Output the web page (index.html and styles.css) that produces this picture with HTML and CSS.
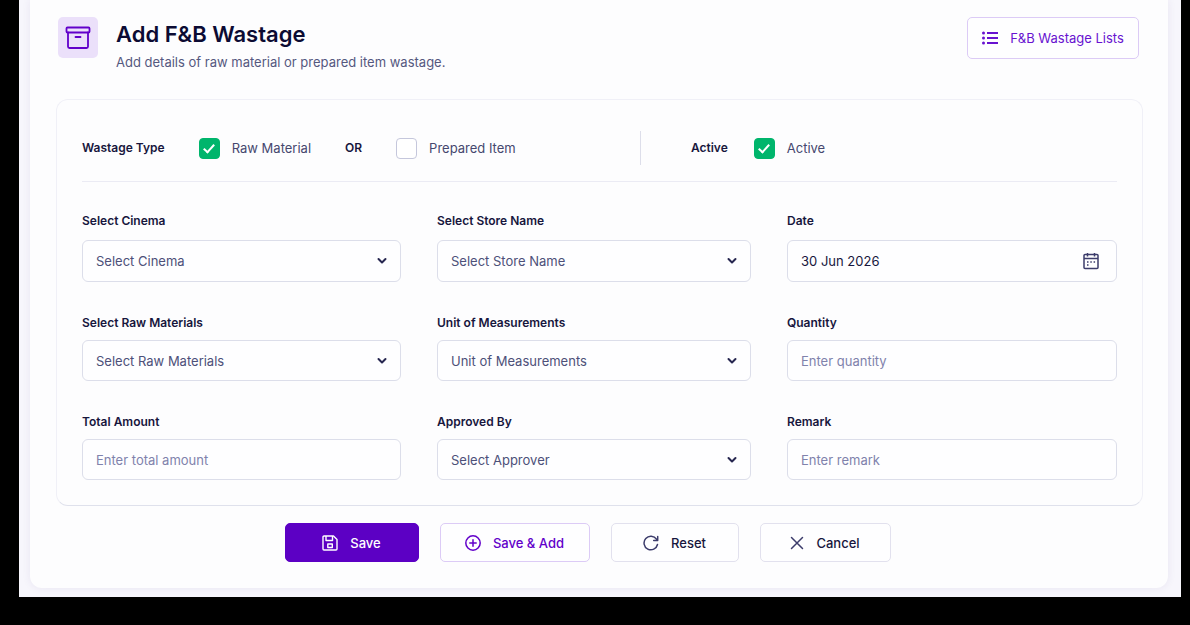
FILE: index.html
```html
<!DOCTYPE html>
<html lang="en">
<head>
  <meta charset="UTF-8" />
  <meta name="viewport" content="width=device-width, initial-scale=1.0" />
  <title>Add F&amp;B Wastage</title>
  <link rel="stylesheet" href="styles.css">
</head>
<body>

<main class="page">
  <form class="card">
    <header class="header">
      <div class="header-icon">
        <svg width="26" height="24" viewBox="0 0 26 24" fill="none" stroke="currentColor" stroke-width="1.8" stroke-linejoin="round" stroke-linecap="round">
          <rect x="1.500" y="1.500" width="23" height="5" rx="1" />
          <path d="M3 6.500v14a1.500 1.500 0 0 0 1.500 1.500h17a1.500 1.500 0 0 0 1.500-1.500v-14M10.500 11h5" />
        </svg>
      </div>
      <div class="header-text">
        <h1>Add F&amp;B Wastage</h1>
        <p>Add details of raw material or prepared item wastage.</p>
      </div>
      <button type="button" class="btn btn-list">
        <svg width="16" height="14" viewBox="0 0 16 14" fill="currentColor">
          <rect x="5" y="1" width="11" height="2" />
          <rect x="5" y="6" width="11" height="2" />
          <rect x="5" y="11" width="11" height="2" />
          <circle cx="1.500" cy="2" r="1.500" />
          <circle cx="1.500" cy="7" r="1.500" />
          <circle cx="1.500" cy="12" r="1.500" />
        </svg>
        F&amp;B Wastage Lists
      </button>
    </header>

    <section class="panel">
      <div class="types">
        <div class="type-group" role="group" aria-labelledby="typeLabel">
          <span class="type-title" id="typeLabel">Wastage Type</span>
          <label class="check"><input type="checkbox" checked />Raw Material</label>
          <span class="or">OR</span>
          <label class="check"><input type="checkbox" />Prepared Item</label>
        </div>
        <div class="active-group" role="group" aria-labelledby="activeLabel">
          <span class="type-title" id="activeLabel">Active</span>
          <label class="check"><input type="checkbox" checked />Active</label>
        </div>
      </div>

      <div class="rows">
        <div class="row row-top">
          <div class="field">
            <label for="cinema">Select Cinema</label>
            <div class="control">
              <select id="cinema"><option>Select Cinema</option></select>
              <svg class="chevron" width="10" height="8" viewBox="0 0 10 8"><path d="M1.500 2 5 5.500 8.500 2" /></svg>
            </div>
          </div>
          <div class="field">
            <label for="store">Select Store Name</label>
            <div class="control">
              <select id="store"><option>Select Store Name</option></select>
              <svg class="chevron" width="10" height="8" viewBox="0 0 10 8"><path d="M1.500 2 5 5.500 8.500 2" /></svg>
            </div>
          </div>
          <div class="field">
            <label for="date">Date</label>
            <div class="control">
              <input type="text" id="date" value="30 Jun 2026" />
              <svg class="calendar" width="16" height="18" viewBox="0 0 16 18" fill="none" stroke="currentColor" stroke-width="1.500">
                <rect x="1" y="2.500" width="14" height="14" rx="1" />
                <path d="M1 6.500h14M4.500 1v3.500M11.500 1v3.500" />
                <path d="M4 10h1.500M7.300 10h1.500M10.600 10h1.500M4 13h1.500" />
              </svg>
            </div>
          </div>
        </div>

        <div class="row">
          <div class="field">
            <label for="material">Select Raw Materials</label>
            <div class="control">
              <select id="material"><option>Select Raw Materials</option></select>
              <svg class="chevron" width="10" height="8" viewBox="0 0 10 8"><path d="M1.500 2 5 5.500 8.500 2" /></svg>
            </div>
          </div>
          <div class="field">
            <label for="unit">Unit of Measurements</label>
            <div class="control">
              <select id="unit"><option>Unit of Measurements</option></select>
              <svg class="chevron" width="10" height="8" viewBox="0 0 10 8"><path d="M1.500 2 5 5.500 8.500 2" /></svg>
            </div>
          </div>
          <div class="field">
            <label for="quantity">Quantity</label>
            <div class="control">
              <input type="text" id="quantity" placeholder="Enter quantity" />
            </div>
          </div>
        </div>

        <div class="row">
          <div class="field">
            <label for="amount">Total Amount</label>
            <div class="control">
              <input type="text" id="amount" placeholder="Enter total amount" />
            </div>
          </div>
          <div class="field">
            <label for="approver">Approved By</label>
            <div class="control">
              <select id="approver"><option>Select Approver</option></select>
              <svg class="chevron" width="10" height="8" viewBox="0 0 10 8"><path d="M1.500 2 5 5.500 8.500 2" /></svg>
            </div>
          </div>
          <div class="field">
            <label for="remark">Remark</label>
            <div class="control">
              <input type="text" id="remark" placeholder="Enter remark" />
            </div>
          </div>
        </div>
      </div>
    </section>

    <div class="actions">
      <button type="submit" class="btn btn-save">
        <svg width="16" height="16" viewBox="0 0 16 16" fill="none" stroke="currentColor" stroke-width="1.400" stroke-linejoin="round">
          <path d="M1 2a1 1 0 0 1 1-1h9.500L15 4.500V14a1 1 0 0 1-1 1H2a1 1 0 0 1-1-1z" />
          <path d="M4 1v4.500h6.500V1M5.800 9h4.500v3.500h-4.500z" />
        </svg>
        Save
      </button>
      <button type="button" class="btn btn-add">
        <svg width="16" height="16" viewBox="0 0 16 16" fill="none" stroke="currentColor" stroke-width="1.500" stroke-linecap="round">
          <circle cx="8" cy="8" r="7.200" />
          <path d="M8 4.800v6.400M4.800 8h6.400" />
        </svg>
        Save &amp; Add
      </button>
      <button type="reset" class="btn btn-reset">
        <svg width="16" height="16" viewBox="0 0 16 16" fill="none" stroke="currentColor" stroke-width="1.500" stroke-linecap="round" stroke-linejoin="round">
          <path d="M14.500 9.500A6.800 6.800 0 1 1 13.500 4.200L14.500 5.500M14.700 1.500v4h-4" />
        </svg>
        Reset
      </button>
      <button type="button" class="btn btn-cancel">
        <svg width="14" height="14" viewBox="0 0 14 14" fill="none" stroke="currentColor" stroke-width="1.500" stroke-linecap="round">
          <path d="M1.500 1.500l11 11M12.500 1.500l-11 11" />
        </svg>
        Cancel
      </button>
    </div>
  </form>
</main>

</body>
</html>
```
FILE: styles.css
```css
* {
  box-sizing: border-box;
}
body {
  margin: 0;
  padding: 0 9px 28px 19px;
  background: #000;
  color: #17163d;
  font-family: Inter, sans-serif;
  font-size: 13px;
  line-height: 18px;
}
.page {
  background: #f7f6fc;
  padding: 0 13px 9px 11px;
  overflow: hidden;
}
.card {
  background: #fdfdfe;
  border-radius: 0 0 12px 12px;
  box-shadow: 0 0 8px rgba(60, 40, 120, 0.08);
  padding: 17px 25px 26px 26px;
}

/* header */
.header {
  display: flex;
  align-items: flex-start;
  padding: 0 4px 0 2px;
  margin-bottom: 27px;
}
.header-icon {
  display: flex;
  align-items: center;
  justify-content: center;
  width: 40px;
  height: 41px;
  border-radius: 5px;
  background: #ebe0fa;
  color: #6200ca;
}
.header-text {
  flex: 1;
  margin-left: 18px;
}
h1 {
  margin: 0;
  font-size: 22px;
  line-height: 34px;
  font-weight: 600;
  color: #0c0b33;
}
.header-text p {
  margin: 1px 0 0;
  line-height: 20px;
  color: #55587f;
}

/* buttons */
.btn {
  display: flex;
  align-items: center;
  justify-content: center;
  gap: 12px;
  height: 39px;
  padding: 0;
  border: 1px solid #e2e1ee;
  border-radius: 5px;
  background: #fefeff;
  color: #17163d;
  font-family: inherit;
  font-size: 13px;
  font-weight: 500;
  cursor: pointer;
}
.btn-list {
  width: 172px;
  height: 42px;
  border-color: #dccbf6;
  color: #6812d0;
  font-weight: 400;
}
.btn-save {
  width: 134px;
  border-color: #5c00c4;
  background: #5c00c4;
  color: #fff;
}
.btn-add {
  width: 150px;
  border-color: #dccbf6;
  color: #6200ca;
}
.btn-reset {
  width: 128px;
}
.btn-cancel {
  width: 131px;
}
.btn-reset svg, .btn-cancel svg {
  color: #3c3c6b;
}

/* form panel */
.panel {
  padding: 31px 25px 25px;
  border: 1px solid #f0f0f7;
  border-bottom-color: #dfe1ec;
  border-radius: 12px;
}
.types {
  display: flex;
  padding-bottom: 16px;
  margin-bottom: 30px;
  border-bottom: 1px solid #ebebf4;
}
.type-group, .active-group {
  display: flex;
  align-items: center;
  height: 34px;
}
.type-group {
  flex: 0 0 54%;
  gap: 34px;
  border-right: 1px solid #dddeea;
}
.active-group {
  gap: 26px;
  padding-left: 50px;
}
.type-title, .or {
  font-size: 12px;
  font-weight: 600;
}
.check {
  display: flex;
  align-items: center;
  gap: 12px;
  color: #46486f;
}
.check input {
  appearance: none;
  display: flex;
  justify-content: center;
  width: 21px;
  height: 21px;
  margin: 0;
  border: 1px solid #c5c7dc;
  border-radius: 4px;
  background: #fff;
}
.check input:checked {
  border-color: #00b56c;
  background: #00b56c;
}
.check input:checked::before {
  content: "";
  width: 4px;
  height: 9px;
  margin-top: 3px;
  border: solid #fff;
  border-width: 0 2px 2px 0;
  transform: rotate(42deg);
}

/* fields */
.rows {
  display: grid;
  gap: 32px;
}
.row {
  display: grid;
  grid-template-columns: 319fr 314fr 330fr;
  gap: 36px;
}
.field {
  display: flex;
  flex-direction: column;
  gap: 8px;
  min-width: 0;
}
.field label {
  font-size: 12px;
  font-weight: 600;
}
.control {
  position: relative;
}
.control select, .control input {
  appearance: none;
  display: block;
  width: 100%;
  height: 41px;
  padding: 0 13px;
  border: 1px solid #dcdeea;
  border-radius: 6px;
  background: #fefeff;
  color: #4d5079;
  font-family: inherit;
  font-size: 13px;
}
.control input {
  color: #17163d;
}
.control input::placeholder {
  color: #8082ac;
}
.row-top .field {
  gap: 10px;
}
.row-top select, .row-top input {
  height: 42px;
}
.chevron {
  position: absolute;
  right: 14px;
  top: calc(50% - 4px);
  fill: none;
  stroke: #26264f;
  stroke-width: 2;
  stroke-linecap: round;
  stroke-linejoin: round;
  pointer-events: none;
}
.calendar {
  position: absolute;
  right: 18px;
  top: calc(50% - 9px);
  color: #3c3c6b;
  pointer-events: none;
}

.actions {
  display: flex;
  justify-content: center;
  gap: 21px;
  margin-top: 17px;
  padding-right: 24px;
}
```
